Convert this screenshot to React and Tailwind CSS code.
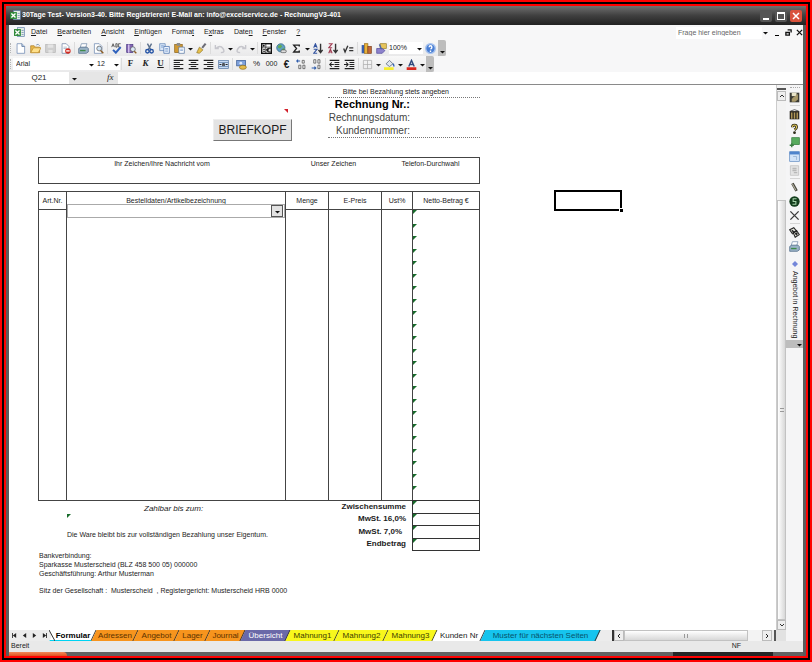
import React, { useState } from 'react';

// All icons are drawn on a 16x16 grid
const icons = {
  excel: <><rect x="5" y="1" width="10" height="13" fill="#e8efe8" stroke="#5c7eaa" /><path d="M11 5h3M11 8h3M11 11h3" stroke="#5c7eaa" /><rect x="0" y="3" width="10" height="10" fill="#2f8a3a" /><path d="M2 5l6 6M8 5l-6 6" stroke="#fff" strokeWidth="2" /></>,
  neu: <><path d="M3 1h7l4 4v10H3z" fill="#fff" stroke="#6482ad" /><path d="M10 1v4h4" fill="#c4d4ea" stroke="#41608c" /></>,
  open: <><path d="M1 14V4h5l2 2h6v8z" fill="#e9b94a" stroke="#a9791e" /><path d="M1 14l4-7h11l-4 7z" fill="#ffe08a" stroke="#b98a2c" /><path d="M9 3q3-3 5 1" stroke="#55779e" fill="none" /></>,
  saveOff: <><rect x="1" y="2" width="14" height="12" fill="#cfcfcf" stroke="#b5b5b5" /><path d="M4 2h8v5H4zM5 10h6v4H5z" fill="#e4e4e4" /></>,
  perm: <><path d="M3 1h6l4 4v10H3z" fill="#fff" stroke="#6b7fa0" /><path d="M5 6h5M5 8h5" stroke="#9ab" /><circle cx="11.500" cy="11.500" r="4" fill="#cf2a20" /><path d="M9 11.500h5" stroke="#fff" strokeWidth="2" /></>,
  print: <><path d="M5 1h8l-2 6H3z" fill="#fff" stroke="#6f87a8" /><path d="M1 8l3-2h9l2 2v5l-3 2H1z" fill="#9bb2c6" stroke="#446180" /><path d="M3 11h8" stroke="#3e8a4a" strokeWidth="2" /></>,
  preview: <><path d="M2 1h7l4 4v10H2z" fill="#fff" stroke="#6482ad" /><circle cx="9" cy="8" r="3.500" fill="#cfe3f5" stroke="#555" /><path d="M11 11l4 4" stroke="#8b5c24" strokeWidth="2" /></>,
  spell: <><path d="M1 6l2-5 2 5M2 4h2M7 1v5h2V1H7M14 1h-3v5h3" stroke="#333" fill="none" /><path d="M3 10l4 4 7-8" stroke="#2f62bd" strokeWidth="3" fill="none" /></>,
  research: <><rect x="1" y="2" width="9" height="12" fill="#8466b5" stroke="#4b3a84" /><path d="M4 2v12" stroke="#d9c7f0" strokeWidth="2" /><circle cx="10" cy="9" r="3.500" fill="#dbe9f6" stroke="#555" /><path d="M12 12l3 3" stroke="#8b5c24" strokeWidth="2" /></>,
  cut: <><path d="M5 1l5 9M11 1L6 10" stroke="#5a6f8c" strokeWidth="2" /><circle cx="5" cy="12" r="2.500" fill="none" stroke="#2453a5" strokeWidth="2" /><circle cx="11" cy="12" r="2.500" fill="none" stroke="#2453a5" strokeWidth="2" /></>,
  copy: <><path d="M1 1h8v10H1z" fill="#dbe8f8" stroke="#5b80b5" /><path d="M7 5h8v10H7z" fill="#eef5ff" stroke="#3c68a8" /><path d="M9 8h4M9 10h4M9 12h4M3 4h4M3 6h3" stroke="#6b91c7" /></>,
  paste: <><rect x="1" y="2" width="11" height="12" fill="#d19a32" stroke="#8c641c" /><rect x="4" y="0" width="5" height="4" fill="#8c8c8c" /><path d="M7 6h8v9H7z" fill="#fff" stroke="#4d6f9f" /><path d="M9 9h4M9 11h4" stroke="#6b91c7" /></>,
  brush: <><path d="M14 1l-5 6" stroke="#6d6d77" strokeWidth="3" /><path d="M5 6l5 4-5 5-4-1z" fill="#e7c04b" stroke="#8f7524" /></>,
  undo: <path d="M2 3v5h5M3 8q6-6 10 0t-3 6" fill="none" stroke="#c6c6cc" strokeWidth="2" />,
  redo: <path d="M14 3v5H9M13 8Q7 2 3 8t3 6" fill="none" stroke="#c6c6cc" strokeWidth="2" />,
  euroGrid: <><rect x="1" y="1" width="14" height="14" fill="#fff" stroke="#111" strokeWidth="2" /><path d="M1 6h14M7 1v14" stroke="#111" /><circle cx="4" cy="4" r="1.500" fill="#111" /><path d="M14 8q-5-1-5 2t5 3M7 10h5M3 9h3M3 12h3" fill="none" stroke="#111" strokeWidth="1.500" /></>,
  link: <><circle cx="7" cy="7" r="6" fill="#5f9fc4" stroke="#2f6584" /><path d="M3 4l4-2 2 3-3 3-3-1zM8 9l4-2v4z" fill="#62ad57" /><rect x="7" y="10" width="8" height="4" rx="2" fill="#ddd" stroke="#555" /></>,
  sum: <path d="M12 5V3H4l4 5-4 5h8v-2" fill="none" stroke="#222" strokeWidth="2" />,
  az: <><path d="M1 7l2.500-6L6 7M2 5h3M1 9h5l-5 6h5" fill="none" stroke="#3555a0" strokeWidth="1.500" /><path d="M11 1v12M8 10l3 4 3-4" fill="none" stroke="#333" strokeWidth="2" /></>,
  za: <><path d="M1 15l2.500-6L6 15M2 13h3M1 1h5L1 7h5" fill="none" stroke="#a33f54" strokeWidth="1.500" /><path d="M11 1v12M8 10l3 4 3-4" fill="none" stroke="#333" strokeWidth="2" /></>,
  root: <path d="M1 8l2 5 4-9M9 7h6M9 11h6" fill="none" stroke="#333" strokeWidth="2" />,
  chart: <><rect x="1" y="3" width="4" height="12" fill="#3a5fae" /><rect x="5" y="1" width="5" height="14" fill="#e8b23c" stroke="#9a6c14" /><rect x="10" y="5" width="5" height="10" fill="#c26a3c" stroke="#7c3e1a" /></>,
  draw: <><rect x="6" y="1" width="9" height="7" fill="#e6c45b" stroke="#9c8029" /><path d="M1 8h8l4 3-4 4H1z" fill="#8d82cc" stroke="#4f469a" /><path d="M5 2l3 7" stroke="#4a68a8" strokeWidth="2" /></>,
  help: <><circle cx="8" cy="8" r="7" fill="#4a7fd4" stroke="#a9c4ee" strokeWidth="2" /><path d="M6 6q0-2 2-2t2 2-2 3M8 11v2" stroke="#fff" strokeWidth="2" fill="none" /></>,
  left: <path d="M1 2h14M1 5h9M1 8h14M1 11h9M1 14h14" stroke="#222" strokeWidth="1.500" />,
  center: <path d="M1 2h14M4 5h8M1 8h14M4 11h8M1 14h14" stroke="#222" strokeWidth="1.500" />,
  right: <path d="M1 2h14M6 5h9M1 8h14M6 11h9M1 14h14" stroke="#222" strokeWidth="1.500" />,
  merge: <><rect x="1" y="2" width="14" height="12" fill="#cfe0f7" stroke="#4f719f" /><path d="M1 5h14M1 11h14" stroke="#4f719f" /><path d="M2 8h3M14 8h-3M7 10V7h2v3" stroke="#222" strokeWidth="1.500" fill="none" /></>,
  currency: <><rect x="1" y="2" width="13" height="8" fill="#7fa2db" stroke="#34558f" /><circle cx="7" cy="6" r="2" fill="#dfe9fa" /><ellipse cx="10" cy="12" rx="5" ry="3" fill="#e4ba48" stroke="#8d6c1b" /></>,
  decMore: <><path d="M6 3H1M3 1L1 3l2 2" stroke="#2f5dac" strokeWidth="1.500" fill="none" /><path d="M9 2h3v4H9zM4 9h3v5H4zM10 9h3v5h-3z" stroke="#444" fill="none" /></>,
  decLess: <><path d="M1 13h6M5 11l2 2-2 2" stroke="#2f5dac" strokeWidth="1.500" fill="none" /><path d="M4 1h3v5H4zM10 1h3v5h-3zM10 9h3v5h-3z" stroke="#444" fill="none" /></>,
  outdent: <path d="M1 2h14M8 5h7M8 8h7M8 11h7M1 14h14M7 8H1M4 5L1 8l3 3" stroke="#222" strokeWidth="1.500" fill="none" />,
  indent: <path d="M1 2h14M8 5h7M8 8h7M8 11h7M1 14h14M0 8h6M3 5l3 3-3 3" stroke="#222" strokeWidth="1.500" fill="none" />,
  borders: <path d="M2 2h12v12H2zM8 2v12M2 8h12" fill="none" stroke="#a9a9a9" />,
  fill: <><path d="M3 7l5-5 5 5-5 4z" fill="#dfe6ef" stroke="#45566e" /><path d="M13 7q2 2 1 4" stroke="#3566b5" strokeWidth="2" fill="none" /><rect x="0" y="12" width="14" height="4" fill="#f6ee2d" /></>,
  fontColor: <><path d="M4 11l4-9 4 9M5 8h6" fill="none" stroke="#2f4a7d" strokeWidth="2" /><rect x="1" y="12" width="14" height="4" fill="#d8281e" /></>,
  disk: <><rect x="1" y="1" width="14" height="14" fill="#3b3b33" /><path d="M4 1h7v5H4z" fill="#e9e4c8" /><path d="M6 8l7-5v8l-4 3H4v-4z" fill="#a89868" /></>,
  books: <><rect x="1" y="3" width="14" height="12" fill="#2e2a22" /><path d="M4 5v9M8 5v9M12 5v9" stroke="#b49a58" strokeWidth="2" /><path d="M2 3q6-4 12 0" stroke="#222" fill="none" /></>,
  ask: <><path d="M5 6q0-3 3-3t3 3q0 2-3 4" fill="none" stroke="#2d2a18" strokeWidth="4" /><path d="M5 6q0-3 3-3t3 3q0 2-3 4" fill="none" stroke="#e3c95a" strokeWidth="1.500" /><circle cx="8" cy="14" r="2" fill="#2d2a18" /></>,
  sheetGo: <><rect x="4" y="1" width="11" height="10" fill="#58ab5e" stroke="#2e7636" /><path d="M1 12h6M4 9v6" stroke="#3c7f43" strokeWidth="2" /></>,
  win: <><rect x="1" y="1" width="14" height="14" fill="#d3e4f8" stroke="#5986c0" /><rect x="1" y="1" width="14" height="4" fill="#4f84cc" /><path d="M6 8h5v5" stroke="#8ba7ca" fill="none" /></>,
  sheetOff: <><path d="M2 1h12v14H2z" fill="#e3e3e3" stroke="#bcbcbc" /><path d="M5 5h6M5 8h6M7 11h5" stroke="#b8b8b8" strokeWidth="2" /></>,
  pencil: <><path d="M5 2l6 11" stroke="#45443c" strokeWidth="4" /><path d="M5 3l5 9" stroke="#b5b2a1" strokeWidth="1.500" /></>,
  five: <><circle cx="8" cy="8" r="7.500" fill="#133d1d" /><path d="M11 4H6v4h4v4H5" fill="none" stroke="#a8d4ac" strokeWidth="1.500" /></>,
  cross: <path d="M2 2l12 12M14 2L2 14" stroke="#3d3d3d" strokeWidth="2" />,
  dice: <><path d="M1 4l6-3 4 5-6 4zM6 8l5-3 4 6-6 4z" fill="#e9e9e0" stroke="#222" strokeWidth="1.500" /><path d="M4 5l3 2M9 9l3 3M11 8l1 2" stroke="#222" strokeWidth="2" /></>,
};

const Icon = ({ name }) => (
  <svg viewBox="0 0 16 16" className="h-[11px] w-[11px] shrink-0" aria-hidden="true">{icons[name]}</svg>
);

const Tool = ({ label, icon, children }) => (
  <button type="button" title={label} aria-label={label} className="flex h-3.5 w-[15px] shrink-0 items-center justify-center">
    {icon ? <Icon name={icon} /> : children}
  </button>
);

const Caret = () => (
  <svg viewBox="0 0 7 7" className="pointer-events-none h-[7px] w-[7px] shrink-0" aria-hidden="true"><path d="M1 3h5L3.500 5.500z" fill="#111" /></svg>
);

const Sep = () => <span className="mx-px h-3 w-px shrink-0 bg-[#dcdcdc]" />;

const Grip = () => <span className="mr-0.5 ml-px h-2.5 w-px shrink-0 border-l border-dotted border-[#b5b5b5]" />;

const BarEnd = () => (
  <span className="flex h-4 w-2 shrink-0 items-end justify-center rounded-r-xs bg-[#bdbdbd] pb-px"><Caret /></span>
);

const Mark = () => (
  <svg viewBox="0 0 4 4" className="block h-1 w-1" aria-hidden="true"><path d="M0 0h4L0 4z" fill="#176b2a" /></svg>
);

const menus = [
  ['', 'D', 'atei'],
  ['', 'B', 'earbeiten'],
  ['', 'A', 'nsicht'],
  ['', 'E', 'infügen'],
  ['Forma', 't', ''],
  ['E', 'x', 'tras'],
  ['Date', 'n', ''],
  ['', 'F', 'enster'],
  ['', '?', ''],
];

const tabs = [
  { name: 'Formular', width: 'w-[42px]', color: 'bg-white border-b border-b-cyan-400', text: 'font-bold text-black' },
  { name: 'Adressen', width: 'w-[42px]', color: 'bg-[#f7941d]', text: 'text-[#5c3200]' },
  { name: 'Angebot', width: 'w-[41px]', color: 'bg-[#f7941d]', text: 'text-[#5c3200]' },
  { name: 'Lager', width: 'w-[31px]', color: 'bg-[#f7941d]', text: 'text-[#5c3200]' },
  { name: 'Journal', width: 'w-[35px]', color: 'bg-[#f7941d]', text: 'text-[#5c3200]' },
  { name: 'Übersicht', width: 'w-[45px]', color: 'bg-[#6a69a8]', text: 'text-white' },
  { name: 'Mahnung1', width: 'w-[49px]', color: 'bg-[#f8f71c]', text: 'text-[#3d3c00]' },
  { name: 'Mahnung2', width: 'w-[49px]', color: 'bg-[#f8f71c]', text: 'text-[#3d3c00]' },
  { name: 'Mahnung3', width: 'w-[49px]', color: 'bg-[#f8f71c]', text: 'text-[#3d3c00]' },
  { name: 'Kunden Nr', width: 'w-[48px]', color: 'bg-white', text: 'text-[#222]' },
  { name: 'Muster für nächsten Seiten', width: 'w-[115px]', color: 'bg-[#16c4ee]', text: 'text-[#07536b]' },
];

const sums = [
  { label: 'Zwischensumme', pad: 'pr-1.5' },
  { label: 'MwSt. 16,0%', pad: 'pr-1.5' },
  { label: 'MwSt. 7,0%', pad: 'pr-2.5' },
  { label: 'Endbetrag', pad: 'pr-1.5' },
];

const rows = Array.from({ length: 23 }, (_, i) => i);

const TitleBar = () => (
  <header className="flex h-[19px] items-center bg-linear-to-b from-[#707070] via-[#404040] to-[#222] pl-1 text-white">
    <Icon name="excel" />
    <h1 className="ml-px grow truncate text-[7px] font-bold">
      30Tage Test- Version3-40. Bitte Registrieren! E-Mail an: info@excelservice.de - RechnungV3-401
    </h1>
    <div className="flex gap-[3px] pr-1">
      <button type="button" aria-label="Minimieren" className="flex h-3 w-3 items-end justify-center rounded-xs bg-[#555] pb-0.5">
        <span className="h-0.5 w-1.5 bg-white" />
      </button>
      <button type="button" aria-label="Maximieren" className="flex h-3 w-3 items-center justify-center rounded-xs bg-[#555]">
        <span className="h-2 w-2 border border-t-2 border-white" />
      </button>
      <button type="button" aria-label="Schließen" className="flex h-3 w-3 items-center justify-center rounded-xs bg-[#d9523c]">
        <svg viewBox="0 0 8 8" className="h-2 w-2"><path d="M1 1l6 6M7 1L1 7" stroke="#fff" strokeWidth="1.500" /></svg>
      </button>
    </div>
  </header>
);

const MenuBar = () => (
  <div className="flex h-[15px] items-center pl-[5px] text-[7px]">
    <Icon name="excel" />
    <nav className="ml-1.5 flex grow gap-2.5">
      {menus.map(([a, key, b]) => (
        <button type="button" key={a + key + b}>{a}<u>{key}</u>{b}</button>
      ))}
    </nav>
    <input
      type="text"
      aria-label="Frage hier eingeben"
      placeholder="Frage hier eingeben"
      className="h-3 w-[86px] bg-white px-0.5 text-[7px] placeholder:text-[#666]"
    />
    <Caret />
    <div className="ml-1 flex items-center gap-1">
      <button type="button" aria-label="Mappe minimieren" className="flex h-2 w-2 items-end justify-center pb-px"><span className="h-px w-1 bg-black" /></button>
      <button type="button" aria-label="Mappe wiederherstellen" className="h-[7px] w-[7px]">
        <svg viewBox="0 0 8 8" className="h-[7px] w-[7px]"><path d="M3 1h4v3M1 4h4v3H1z" fill="none" stroke="#111" strokeWidth="1.500" /></svg>
      </button>
      <button type="button" aria-label="Mappe schließen" className="h-[7px] w-[7px]">
        <svg viewBox="0 0 8 8" className="h-[7px] w-[7px]"><path d="M1 1l6 6M7 1L1 7" stroke="#111" strokeWidth="1.500" /></svg>
      </button>
    </div>
  </div>
);

const StandardBar = () => (
  <div className="flex h-4 w-max items-center bg-linear-to-b from-[#f8f8f8] to-[#e9e9ea]">
    <Grip />
    <Tool label="Neu" icon="neu" />
    <Tool label="Öffnen" icon="open" />
    <Tool label="Speichern" icon="saveOff" />
    <Tool label="Berechtigung" icon="perm" />
    <Sep />
    <Tool label="Drucken" icon="print" />
    <Tool label="Seitenansicht" icon="preview" />
    <Sep />
    <Tool label="Rechtschreibung" icon="spell" />
    <Tool label="Recherchieren" icon="research" />
    <Sep />
    <Tool label="Ausschneiden" icon="cut" />
    <Tool label="Kopieren" icon="copy" />
    <Tool label="Einfügen" icon="paste" />
    <Caret />
    <Tool label="Format übertragen" icon="brush" />
    <Sep />
    <Tool label="Rückgängig" icon="undo" />
    <Caret />
    <Tool label="Wiederholen" icon="redo" />
    <Caret />
    <Sep />
    <Tool label="Euroumrechnung" icon="euroGrid" />
    <Tool label="Hyperlink" icon="link" />
    <Tool label="AutoSumme" icon="sum" />
    <Caret />
    <Tool label="Aufsteigend sortieren" icon="az" />
    <Tool label="Absteigend sortieren" icon="za" />
    <Tool label="Formel" icon="root" />
    <Sep />
    <Tool label="Diagramm" icon="chart" />
    <Tool label="Zeichnen" icon="draw" />
    <span className="flex h-3 items-center bg-white">
      <select aria-label="Zoom" className="w-[27px] appearance-none text-[7px]"><option>100%</option></select>
      <Caret />
    </span>
    <Tool label="Hilfe" icon="help" />
    <BarEnd />
  </div>
);

const FormatBar = () => (
  <div className="flex h-4 w-max items-center bg-linear-to-b from-[#f8f8f8] to-[#e9e9ea]">
    <Grip />
    <span className="flex h-3 items-center bg-white">
      <select aria-label="Schriftart" className="w-[75px] appearance-none pl-[3px] text-[7px]"><option>Arial</option></select>
      <Caret />
    </span>
    <span className="flex h-3 items-center bg-white">
      <select aria-label="Schriftgrad" className="w-[18px] appearance-none pl-0.5 text-[7px]"><option>12</option></select>
      <Caret />
    </span>
    <Sep />
    <Tool label="Fett"><b className="font-[Liberation_Serif,serif] text-[9px]">F</b></Tool>
    <Tool label="Kursiv"><b className="font-[Liberation_Serif,serif] text-[9px] italic">K</b></Tool>
    <Tool label="Unterstrichen"><b className="font-[Liberation_Serif,serif] text-[9px] underline">U</b></Tool>
    <Sep />
    <Tool label="Linksbündig" icon="left" />
    <Tool label="Zentriert" icon="center" />
    <Tool label="Rechtsbündig" icon="right" />
    <Tool label="Verbinden und zentrieren" icon="merge" />
    <Sep />
    <Tool label="Währung" icon="currency" />
    <Tool label="Prozentformat"><span className="text-[8px]">%</span></Tool>
    <Tool label="1.000er-Trennzeichen"><span className="text-[7px]">000</span></Tool>
    <Tool label="Euro"><b className="text-[10px]">€</b></Tool>
    <Tool label="Dezimalstelle hinzufügen" icon="decMore" />
    <Tool label="Dezimalstelle löschen" icon="decLess" />
    <Sep />
    <Tool label="Einzug verkleinern" icon="outdent" />
    <Tool label="Einzug vergrößern" icon="indent" />
    <Sep />
    <Tool label="Rahmen" icon="borders" />
    <Caret />
    <Tool label="Füllfarbe" icon="fill" />
    <Caret />
    <Tool label="Schriftfarbe" icon="fontColor" />
    <Caret />
    <BarEnd />
  </div>
);

const FormulaBar = () => (
  <div className="flex h-[13px] items-center border-b border-[#8a8a8a] bg-white">
    <input type="text" aria-label="Namenfeld" defaultValue="Q21" className="w-[60px] text-center text-[8px]" />
    <span className="flex h-full w-[38px] items-center bg-[#e6e6e6] pl-0.5"><Caret /></span>
    <label htmlFor="formel" className="h-full bg-[#e6e6e6] pr-1 font-[Liberation_Serif,serif] text-[9px] leading-[11px] italic">fx</label>
    <input type="text" id="formel" className="h-full min-w-0 grow bg-white px-1 text-[8px]" />
  </div>
);

const Invoice = () => (
  <section className="w-[442px] text-[7px] leading-[9px]">
    <div className="flex items-end justify-between">
      <div className="ml-[175px] flex flex-col items-end">
        <svg viewBox="0 0 4 4" className="mr-1 mb-1.5 h-1 w-1" aria-hidden="true"><path d="M0 0h4v4z" fill="#d2202b" /></svg>
        <button type="button" className="mb-[-3px] h-[22px] w-[79px] border border-t-[#eee] border-r-[#777] border-b-[#777] border-l-[#eee] bg-[#e3e3e3] text-[12px] whitespace-nowrap">
          BRIEFKOPF
        </button>
      </div>
      <div className="w-[152px]">
        <p className="border-b border-dotted border-[#777] pr-[31px] pb-px text-right">Bitte bei Bezahlung stets angeben</p>
        <div className="border-b border-dotted border-[#777] pr-[70px] text-right text-[10px] leading-[13px] whitespace-nowrap text-[#444]">
          <h2 className="text-[11px] font-bold text-black">Rechnung Nr.:</h2>
          <p>Rechnungsdatum:</p>
          <p>Kundennummer:</p>
        </div>
      </div>
    </div>

    <div className="mt-[19px] flex h-[27px] border border-[#444] pt-px text-center">
      <span className="w-[246px]">Ihr Zeichen/Ihre Nachricht vom</span>
      <span className="w-[97px]">Unser Zeichen</span>
      <span className="w-[97px]">Telefon-Durchwahl</span>
    </div>

    <table className="mt-[7px] h-[310px] w-full table-fixed border-collapse border border-[#444]">
      <thead>
        <tr className="h-[18px] border-b border-[#444] *:border-r *:border-[#444] *:p-0 *:font-normal">
          <th className="w-[28px]">Art.Nr.</th>
          <th className="relative w-[219px]">
            Bestelldaten/Artikelbezeichnung
            <div className="absolute top-3 left-0 z-10 flex h-3.5 w-full items-center border border-[#aaa] bg-white">
              <select aria-label="Artikel" className="h-full grow appearance-none text-[7px]"><option></option></select>
              <span className="pointer-events-none mr-px flex h-3 w-3 items-center justify-center border border-[#555] bg-[#e2e2e2]"><Caret /></span>
            </div>
          </th>
          <th className="w-[43px]">Menge</th>
          <th className="w-[53px]">E-Preis</th>
          <th className="w-[31px]">Ust%</th>
          <th>Netto-Betrag €</th>
        </tr>
      </thead>
      <tbody>
        {rows.map(i => (
          <tr key={i} className="*:border-r *:border-[#444] *:p-0">
            <td /><td /><td /><td /><td />
            <td className="align-top"><Mark /></td>
          </tr>
        ))}
      </tbody>
    </table>

    <div className="flex justify-between">
      <div className="pl-[29px]">
        <p className="mt-0.5 ml-[77px] text-[8px] leading-[11px] italic">Zahlbar bis zum:</p>
        <Mark />
        <p className="mt-3">Die Ware bleibt bis zur vollständigen Bezahlung unser Eigentum.</p>
      </div>
      <table className="mt-[-1px] h-[51px] border-collapse text-[8px] leading-[10px]">
        <tbody>
          {sums.map(s => (
            <tr key={s.label}>
              <th className={`p-0 text-right font-bold ${s.pad}`}>{s.label}</th>
              <td className="w-[67px] border border-[#333] p-0 align-top"><Mark /></td>
            </tr>
          ))}
        </tbody>
      </table>
    </div>

    <address className="pl-px not-italic">
      <p>Bankverbindung:</p>
      <p>Sparkasse Musterscheid (BLZ 458 500 05) 000000</p>
      <p>Geschäftsführung: Arthur Musterman</p>
      <p className="mt-2 whitespace-pre">Sitz der Gesellschaft :  Musterscheid  , Registergericht: Musterscheid HRB 0000</p>
    </address>
  </section>
);

const VScroll = () => (
  <div className="flex w-2.5 shrink-0 flex-col border-l border-[#ccc] bg-[#f3f3f3]">
    <span className="mt-[3px] mb-px h-0.5 bg-[#555]" />
    <button type="button" aria-label="Nach oben" className="flex h-2.5 items-center justify-center border border-[#bbb] bg-[#eee]">
      <svg viewBox="0 0 6 4" className="h-1 w-1.5"><path d="M1 3l2-2 2 2" fill="none" stroke="#333" /></svg>
    </button>
    <span className="h-[99px]" />
    <span className="flex grow items-center justify-center border border-[#c2c2c2] bg-linear-to-r from-white to-[#d8d8d8]">
      <span className="h-1 w-1 border-y border-[#999]" />
    </span>
    <button type="button" aria-label="Nach unten" className="flex h-2.5 items-center justify-center border border-[#bbb] bg-[#eee]">
      <svg viewBox="0 0 6 4" className="h-1 w-1.5"><path d="M1 1l2 2 2-2" fill="none" stroke="#333" /></svg>
    </button>
  </div>
);

const Dock = () => (
  <aside className="flex w-[17px] shrink-0 flex-col items-center bg-[#f5f5f6]">
    <span className="mt-0.5 mb-px h-0.5 w-2.5 border-t border-dotted border-[#aaa]" />
    <Tool label="Speichern unter" icon="disk" />
    <span className="my-px h-px w-2.5 bg-[#d5d5d5]" />
    <Tool label="Artikel" icon="books" />
    <Tool label="Info" icon="ask" />
    <Tool label="Blatt" icon="sheetGo" />
    <Tool label="Fenster" icon="win" />
    <Tool label="Vorlage" icon="sheetOff" />
    <span className="my-px h-px w-2.5 bg-[#d5d5d5]" />
    <Tool label="Bearbeiten" icon="pencil" />
    <Tool label="Nummer" icon="five" />
    <Tool label="Löschen" icon="cross" />
    <span className="my-px h-px w-2.5 bg-[#d5d5d5]" />
    <Tool label="Zufall" icon="dice" />
    <Tool label="Beleg drucken" icon="print" />
    <button type="button" className="mt-2 flex flex-col items-center gap-1">
      <svg viewBox="0 0 6 6" className="h-1.5 w-1.5"><path d="M3 0l3 3-3 3-3-3z" fill="#7386d9" /></svg>
      <span className="text-[7px] leading-[10px] whitespace-nowrap [writing-mode:vertical-rl]">Angebot in Rechnung</span>
    </button>
    <span className="mt-0.5 flex h-2 w-full items-center justify-end bg-[#bdbdbd]"><Caret /></span>
  </aside>
);

const NavButton = ({ label, d }) => (
  <button type="button" aria-label={label} className="flex w-2.5 items-center justify-center">
    <svg viewBox="0 0 6 6" className="h-[5px] w-[5px]"><path d={d} fill="#222" stroke="none" /></svg>
  </button>
);

const SheetTabs = () => {
  const [active, setActive] = useState('Formular');

  return (
    <div className="flex h-[11px] bg-[#ececec]">
      <NavButton label="Erstes Blatt" d="M0 0h1v6H0zM5 0v6L1 3z" />
      <NavButton label="Vorheriges Blatt" d="M5 0v6L1 3z" />
      <NavButton label="Nächstes Blatt" d="M1 0v6l4-3z" />
      <NavButton label="Letztes Blatt" d="M5 0h1v6H5zM1 0v6l4-3z" />
      <div role="tablist" className="ml-[3px] flex">
        {tabs.map(t => (
          <button
            type="button"
            role="tab"
            key={t.name}
            aria-selected={active === t.name}
            onClick={() => setActive(t.name)}
            className={`relative flex shrink-0 items-center justify-center text-[8px] leading-[10px] whitespace-nowrap ${t.width} ${t.text}`}
          >
            <span className={`absolute inset-0 -skew-x-[25deg] border-r border-r-[#333] ${t.color}`} />
            {t.name === 'Formular' && (
              <svg viewBox="0 0 6 11" className="absolute top-0 left-[-3px] h-[11px] w-1.5" aria-hidden="true"><path d="M0 0h6v11H6z" fill="#fff" /><path d="M0 0l6 11" stroke="#333" /></svg>
            )}
            <span className="relative">{t.name}</span>
          </button>
        ))}
      </div>
      <div className="ml-auto flex w-[164px] shrink-0 border-l-2 border-[#333]">
        <button type="button" aria-label="Nach links" className="flex w-2.5 items-center justify-center border border-[#bbb] bg-[#eee]">
          <svg viewBox="0 0 4 6" className="h-1.5 w-1"><path d="M3 1L1 3l2 2" fill="none" stroke="#222" /></svg>
        </button>
        <span className="flex w-[124px] items-center justify-center border border-[#c2c2c2] bg-linear-to-b from-white to-[#d8d8d8]">
          <span className="h-1 w-1 border-x border-[#999]" />
        </span>
        <span className="grow bg-[#f3f3f3]" />
        <button type="button" aria-label="Nach rechts" className="flex w-2.5 items-center justify-center border border-[#bbb] bg-[#eee]">
          <svg viewBox="0 0 4 6" className="h-1.5 w-1"><path d="M1 1l2 2-2 2" fill="none" stroke="#222" /></svg>
        </button>
        <span className="ml-0.5 w-0.5 bg-[#555]" />
      </div>
      <span className="w-2.5 shrink-0 bg-[#e2e2e2]" />
    </div>
  );
};

const App = () => {
  return (
    <div className="flex min-h-screen flex-col border-2 border-[#f00] bg-black p-0.5 font-[Liberation_Sans,Arial,sans-serif] text-[#1c1c1c]">
      <div className="flex grow flex-col border-2 border-[#f00] bg-[#5b5b5b]">
        <TitleBar />
        <main className="mx-[3px] flex grow flex-col bg-[#f7f7f8]">
          <MenuBar />
          <StandardBar />
          <FormatBar />
          <FormulaBar />
          <div className="flex grow">
            <div className="flex min-w-0 grow flex-col">
              <div className="flex grow">
                <div className="relative min-w-0 grow overflow-hidden bg-white pt-0.5 pb-4 pl-[29px]">
                  <Invoice />
                  {/* Aktive Zelle Q21 */}
                  <div className="absolute top-[105px] left-[545px] h-[21px] w-[68px] border-2 border-black">
                    <span className="absolute -right-[3px] -bottom-[3px] h-1 w-1 border-t border-l border-white bg-black" />
                  </div>
                </div>
                <VScroll />
              </div>
              <SheetTabs />
            </div>
            <Dock />
          </div>
          <footer className="flex h-[11px] items-center bg-[#e9e9e9] pr-[62px] pl-0.5 text-[7px]">
            <span className="grow">Bereit</span>
            <span>NF</span>
          </footer>
        </main>
        <div className="mx-[3px] flex h-1 justify-between bg-[#626262]">
          <span className="w-[58px] rounded-tr-full bg-linear-to-b from-[#f0895a] to-[#e2501e]" />
          <span className="mr-[30px] w-[100px] bg-[#252525]" />
        </div>
      </div>
    </div>
  );
};

export default App;
